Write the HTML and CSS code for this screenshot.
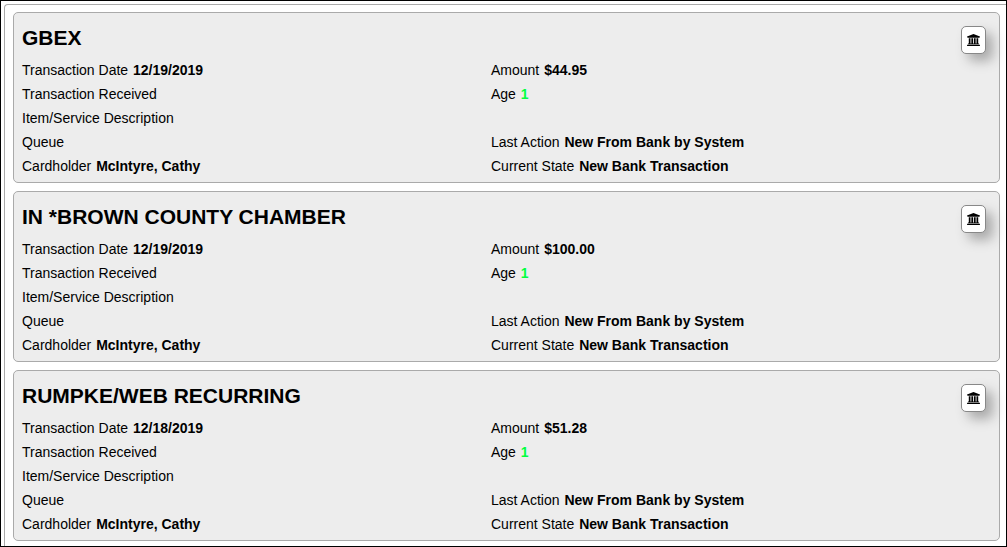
FILE: index.html
```html
<!DOCTYPE html>
<html lang="en">

<head>
    <meta charset="UTF-8">
    <meta name="viewport" content="width=device-width, initial-scale=1.0">
    <title>Transactions</title>
    <link rel="stylesheet" href="styles.css">
</head>

<body>
    <!-- Bank icon shared by all the cards -->
    <svg class="sprite" aria-hidden="true">
        <symbol id="bank" viewBox="0 0 1920 1792">
            <path d="M960 0l960 384v128h-128q0 26-20.5 45t-48.5 19h-1526q-28 0-48.5-19t-20.5-45h-128v-128zM256 640h256v768h128v-768h256v768h128v-768h256v768h128v-768h256v768h59q28 0 48.5 19t20.5 45v64h-1664v-64q0-26 20.5-45t48.5-19h59v-768zM1851 1600q28 0 48.5 19t20.5 45v128h-1920v-128q0-26 20.5-45t48.5-19h1782z" />
        </symbol>
    </svg>

    <main class="panel">
        <section class="card">
            <button class="bank-button" type="button" aria-label="Bank"><svg><use href="#bank" /></svg></button>
            <h2>GBEX</h2>
            <div class="fields">
                <div>Transaction Date <b>12/19/2019</b></div>
                <div>Amount <b>$44.95</b></div>
                <div>Transaction Received</div>
                <div>Age <b class="age">1</b></div>
                <div class="wide">Item/Service Description</div>
                <div>Queue</div>
                <div>Last Action <b>New From Bank by System</b></div>
                <div>Cardholder <b>McIntyre, Cathy</b></div>
                <div>Current State <b>New Bank Transaction</b></div>
            </div>
        </section>

        <section class="card">
            <button class="bank-button" type="button" aria-label="Bank"><svg><use href="#bank" /></svg></button>
            <h2>IN *BROWN COUNTY CHAMBER</h2>
            <div class="fields">
                <div>Transaction Date <b>12/19/2019</b></div>
                <div>Amount <b>$100.00</b></div>
                <div>Transaction Received</div>
                <div>Age <b class="age">1</b></div>
                <div class="wide">Item/Service Description</div>
                <div>Queue</div>
                <div>Last Action <b>New From Bank by System</b></div>
                <div>Cardholder <b>McIntyre, Cathy</b></div>
                <div>Current State <b>New Bank Transaction</b></div>
            </div>
        </section>

        <section class="card">
            <button class="bank-button" type="button" aria-label="Bank"><svg><use href="#bank" /></svg></button>
            <h2>RUMPKE/WEB RECURRING</h2>
            <div class="fields">
                <div>Transaction Date <b>12/18/2019</b></div>
                <div>Amount <b>$51.28</b></div>
                <div>Transaction Received</div>
                <div>Age <b class="age">1</b></div>
                <div class="wide">Item/Service Description</div>
                <div>Queue</div>
                <div>Last Action <b>New From Bank by System</b></div>
                <div>Cardholder <b>McIntyre, Cathy</b></div>
                <div>Current State <b>New Bank Transaction</b></div>
            </div>
        </section>
    </main>
</body>

</html>
```
FILE: styles.css
```css
* {
    box-sizing: border-box;
}

body {
    display: flex;
    min-height: 100vh;
    margin: 0;
    padding: 3px 0 0 3px;
    border: 1px solid #000;
    background-color: #fff;
    color: #000;
    font-family: Arial, "Liberation Sans", sans-serif;
    font-size: 14px;
    line-height: 24px;
}

.sprite {
    display: none;
}

.panel {
    display: flex;
    flex: 1;
    flex-direction: column;
    gap: 8px;
    padding: 7px 6px 4px 8px;
    border: 1px solid #aaa;
    border-width: 1px 0 0 1px;
    border-top-left-radius: 4px;
}

.card {
    position: relative;
    padding: 13px 8px 4px;
    border: 1px solid #aaa;
    border-radius: 5px;
    background-color: #ededed;
}

.card h2 {
    margin: 0 0 8px;
    font-size: 21px;
    line-height: 24px;
}

.fields {
    display: grid;
    grid-template-columns: 469px 1fr;
}

.fields b {
    margin-left: 1px;
}

.wide {
    grid-column: 1 / -1;
}

.age {
    color: #00ff40;
}

.bank-button {
    position: absolute;
    top: 13px;
    right: 13px;
    display: flex;
    align-items: center;
    justify-content: center;
    width: 25px;
    height: 28px;
    padding: 0;
    border: 1px solid #888;
    border-radius: 5px;
    background-color: #fff;
    box-shadow: 7px 7px 12px #aaa;
    cursor: pointer;
}

.bank-button svg {
    width: 13px;
    height: 12px;
}
```
